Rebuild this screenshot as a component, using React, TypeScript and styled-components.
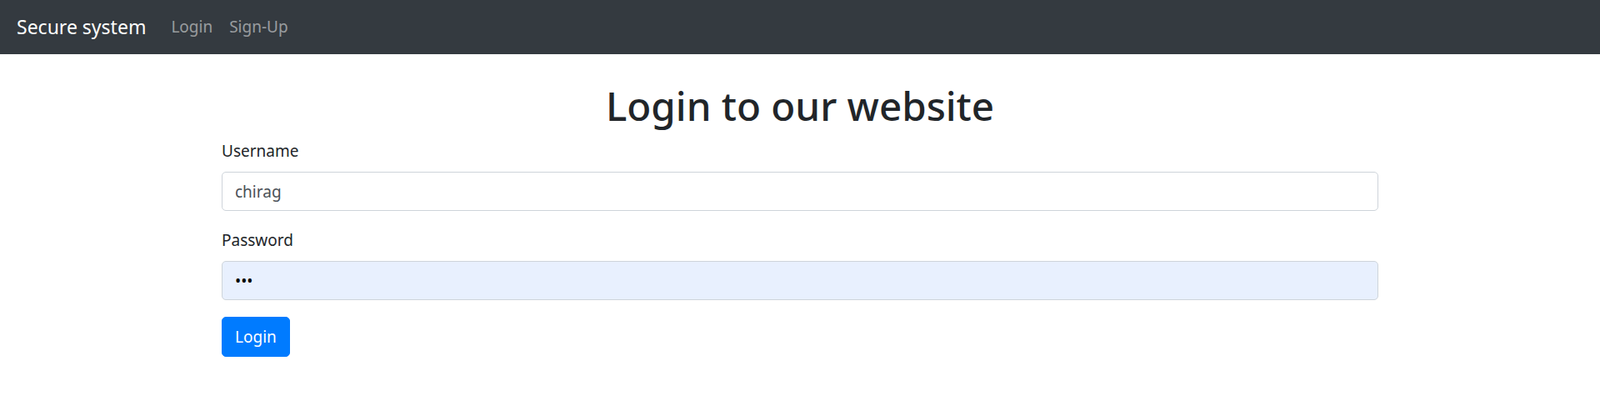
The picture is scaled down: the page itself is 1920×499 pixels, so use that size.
import React from "react";
import styled, { createGlobalStyle } from "styled-components";

const Global = createGlobalStyle`
  html, body { margin: 0; padding: 0; background: #fff; }
  body {
    font-family: "Noto Sans", "Open Sans", sans-serif;
    font-size: 20px;
    line-height: 1.5;
    color: #212529;
  }
  * { box-sizing: border-box; }
`;

const Navbar = styled.nav`
  height: 65px;
  background: #343a40;
  display: flex;
  align-items: center;
  padding: 0 20px;
`;

const Brand = styled.a`
  font-size: 23px;
  color: #fff;
  text-decoration: none;
  margin-right: 20px;
  white-space: nowrap;
  line-height: 1.5;
`;

const NavLinks = styled.div`
  display: flex;
`;

const NavLink = styled.a`
  color: rgba(255, 255, 255, 0.5);
  font-size: 19px;
  padding: 0 10px;
  text-decoration: none;
`;

const Container = styled.main`
  width: 1388px;
  margin: 0 auto;
  padding-top: 32px;
`;

const Title = styled.h1`
  margin: 0 0 9px;
  font-size: 47.5px;
  font-weight: 500;
  line-height: 60px;
  text-align: center;
  color: #212529;
`;

const FormGroup = styled.div`
  margin-bottom: 20px;
`;

const Label = styled.label`
  display: block;
  font-size: 19px;
  line-height: 30px;
  margin-bottom: 10px;
`;

const Input = styled.input<{ $autofill?: boolean }>`
  display: block;
  width: 100%;
  height: 47px;
  padding: 7px 15px;
  font-family: inherit;
  font-size: 19px;
  color: ${(p) => (p.$autofill ? "#000" : "#495057")};
  background: ${(p) => (p.$autofill ? "#e8f0fe" : "#fff")};
  border: 1px solid #ced4da;
  border-radius: 5px;
  outline: none;
`;

const Button = styled.button`
  display: inline-block;
  height: 48px;
  padding: 0 15px;
  font-family: inherit;
  font-size: 19px;
  color: #fff;
  background: #007bff;
  border: 1px solid #007bff;
  border-radius: 5px;
`;

export default function App() {
  return (
    <>
      <Global />
      <Navbar>
        <Brand href="#">Secure system</Brand>
        <NavLinks>
          <NavLink href="#">Login</NavLink>
          <NavLink href="#">Sign-Up</NavLink>
        </NavLinks>
      </Navbar>
      <Container>
        <Title>Login to our website</Title>
        <form onSubmit={(e) => e.preventDefault()}>
          <FormGroup>
            <Label htmlFor="username">Username</Label>
            <Input id="username" type="text" defaultValue="chirag" />
          </FormGroup>
          <FormGroup>
            <Label htmlFor="password">Password</Label>
            <Input id="password" type="password" defaultValue="abc" $autofill />
          </FormGroup>
          <Button type="submit">Login</Button>
        </form>
      </Container>
    </>
  );
}
